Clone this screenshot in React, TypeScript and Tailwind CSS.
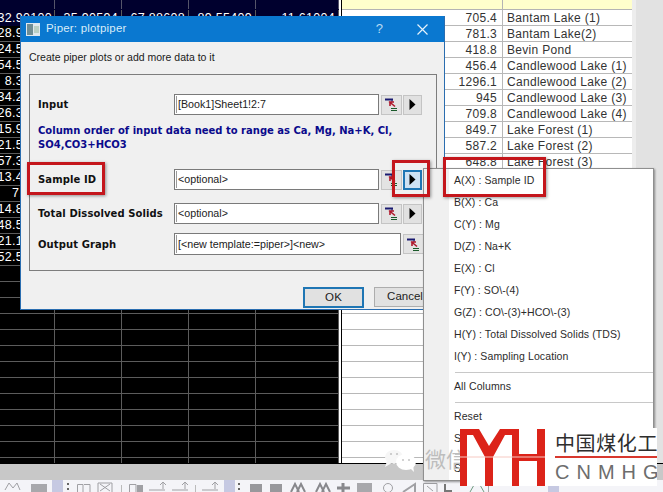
import React from "react";

const leftRows = ["32.90100","28.90000","24.50000","54.50000","8.30000","34.20000","26.30000","15.90000","21.50000","57.30000","13.40000","7.1000","14.80000","48.50000","21.10000","52.50000"];
const rightRows: [string, string][] = [
  ["705.4","Bantam Lake (1)"],["781.3","Bantam Lake(2)"],["418.8","Bevin Pond"],["456.4","Candlewood Lake (1)"],
  ["1296.1","Candlewood Lake (2)"],["945","Candlewood Lake (3)"],["709.8","Candlewood Lake (4)"],["849.7","Lake Forest (1)"],
  ["587.2","Lake Forest (2)"],["648.8","Lake Forest (3)"],
];
const firstRow = ["35.90594","67.88608","89.55409","11.61004"];

function PickIcon() {
  return (
    <svg width="15" height="15" viewBox="0 0 15 15">
      <path d="M1 2.500H9" stroke="#1a1a70" strokeWidth="2" />
      <path d="M8 2.500V5" stroke="#1a1a70" strokeWidth="1" />
      <path d="M5 4.500L11 9.500M6 9V5H10" stroke="#b0182c" strokeWidth="1.600" fill="none" />
      <path d="M7 11.500H13M7 13.500H13" stroke="#1a5a2a" strokeWidth="1" />
    </svg>
  );
}

function PickButton() {
  return (
    <div className="w-[21px] h-[20px] shrink-0 bg-[#e3e3e3] border border-[#c4c4c4] flex items-center justify-center">
      <PickIcon />
    </div>
  );
}

function ArrowButton({ focused }: { focused?: boolean }) {
  return (
    <div className={focused ? "w-[19px] h-[20px] shrink-0 bg-[#cfe2f3] border-2 border-[#1f76b4] flex items-center justify-center" : "w-[19px] h-[20px] shrink-0 bg-[#e1e1e1] border border-[#c4c4c4] flex items-center justify-center"}>
      <svg width="7" height="11" viewBox="0 0 7 11"><path d="M0.500 0L6.500 5.500L0.500 11Z" fill="#000" /></svg>
    </div>
  );
}

function Field({ text, wide }: { text: string; wide?: boolean }) {
  return (
    <div className={wide ? "w-[227px] h-full shrink-0 bg-white border border-[#7a7a7a] p-px" : "w-[205px] h-full shrink-0 bg-white border border-[#7a7a7a] p-px"}>
      <div className="h-full border-l border-[#9a9a9a] pl-[1px] flex items-center text-[10.7px] text-[#222] leading-none">{text}</div>
    </div>
  );
}

const labelCls = "w-[136px] shrink-0 font-['DejaVu_Sans'] font-bold text-[10px] text-[#111] tracking-[0.1px]";

function MenuItem({ text }: { text: string }) {
  return <div className="h-[22px] pl-[5px] flex items-center text-[10.5px] text-[#2b2b2b] tracking-[0.1px] whitespace-nowrap">{text}</div>;
}

function MenuSep() {
  return <div className="h-[8px] flex items-center pl-[6px]"><div className="h-px w-full bg-[#c8c8c8]" /></div>;
}

function Toolbar() {
  const g = "#a0a0a4";
  return (
    <svg width="663" height="12" viewBox="0 0 663 12" className="block">
      <path d="M5 10L9 3L13 8L17 3L20 10" stroke={g} fill="none" />
      <rect x="31" y="4" width="16" height="8" fill="#a8a8ac" />
      <rect x="52" y="0" width="11" height="12" fill="#c6c9e2" />
      <rect x="67" y="3" width="2" height="2" fill="#666" /><rect x="67" y="8" width="2" height="2" fill="#666" />
      <path d="M77.500 12V4.500H83V12M84 4.500H90V12" stroke={g} fill="none" />
      <path d="M98 12V3H112V12M100 4L110 11M110 4L100 11" stroke={g} fill="none" />
      <path d="M121.500 5V12" stroke="#bbb" />
      <path d="M129.500 12V4.500H136V12" stroke={g} fill="none" /><rect x="137" y="5" width="6" height="7" fill={g} />
      <path d="M149 10H165M163 3V9M160 5L163 2L166 5" stroke={g} fill="none" />
      <path d="M172 10H188M185 3V9M182 5L185 2L188 5" stroke={g} fill="none" />
      <path d="M195.500 5V12" stroke="#bbb" />
      <path d="M202 10H218M215 3V9M212 5L215 2L218 5" stroke={g} fill="none" />
      <rect x="224" y="0" width="11" height="12" fill="#c6c9e2" />
      <rect x="238" y="3" width="2" height="2" fill="#666" /><rect x="238" y="8" width="2" height="2" fill="#666" />
      <rect x="250" y="4" width="12" height="8" fill="#98989c" />
      <rect x="270" y="4" width="12" height="8" fill="#98989c" />
      <path d="M291 12L295 4L299 12M297 12L301 4L305 12" stroke="#88888c" strokeWidth="2" fill="none" />
      <path d="M316 12L320 4L324 12M322 12L326 4L330 12" stroke="#88888c" strokeWidth="2" fill="none" />
      <path d="M337 8H350M343 3V12" stroke="#88888c" strokeWidth="3" />
      <rect x="357" y="3" width="15" height="9" fill="#a8a8ac" />
      <circle cx="388" cy="8" r="4.500" stroke={g} fill="none" />
      <path d="M403 12L415 4V12" stroke={g} strokeWidth="2" fill="none" />
      <path d="M423.500 12V3.500H437V12M427 6L433 11" stroke={g} fill="none" />
      <path d="M445 4V11H452" stroke="#777" strokeWidth="2" fill="none" />
      <path d="M470 12L474 5H480L484 12" stroke="#6f9a80" fill="none" />
      <path d="M488.500 2V12M494.500 2H560" stroke="#aaa" fill="none" />
      <rect x="548" y="0" width="11" height="12" fill="#c6c9e2" />
    </svg>
  );
}

export default function App() {
  return (
    <div className="relative w-[663px] h-[492px] overflow-hidden bg-[#c8c8c8] font-['Liberation_Sans',sans-serif]">
      {/* Worksheets behind the dialog */}
      <div className="flex h-[463px] overflow-hidden">
        <div className="w-[339px] shrink-0 bg-black text-white text-[12.5px] leading-none tracking-[0.3px]">
          <div className="h-[10px] bg-[#00002e] border-b border-[#00002e] grid grid-cols-[55px_67px_67px_67px_83px]">
            {[0, 1, 2, 3, 4].map((i) => <div key={i} className="border-r border-[#55556a]" />)}
          </div>
          {Array.from({ length: 29 }).map((_, r) => (
            <div key={r} className={r === 0 ? "h-[16px] grid grid-cols-[55px_67px_67px_67px_83px] bg-[#00002e]" : "h-[16px] grid grid-cols-[55px_67px_67px_67px_83px] border-b border-[#5c5c5c]"}>
              <div className="border-r border-[#5c5c5c] pr-[2px] flex items-center justify-end whitespace-nowrap">{leftRows[r] ?? ""}</div>
              {[0, 1, 2, 3].map((c) => (
                <div key={c} className="border-r border-[#5c5c5c] pr-[3px] flex items-center justify-end whitespace-nowrap">{r === 0 ? firstRow[c] : ""}</div>
              ))}
            </div>
          ))}
        </div>
        <div className="w-[3px] shrink-0 bg-white border-r border-black" />
        <div className="w-[290px] shrink-0 bg-white text-[12px] text-[#333] tracking-[0.3px] leading-none">
          <div className="h-[10px] bg-[#ffffcc] border-b border-[#b4b4b4] grid grid-cols-[161px_129px]">
            <div className="border-r border-[#b4b4b4]" /><div />
          </div>
          {Array.from({ length: 29 }).map((_, r) => (
            <div key={r} className="h-[16px] grid grid-cols-[161px_129px] border-b border-[#b8b8b8]">
              <div className="border-r border-[#b8b8b8] pr-[5px] flex items-center justify-end">{rightRows[r]?.[0] ?? ""}</div>
              <div className="pl-[4px] flex items-center whitespace-nowrap">{rightRows[r]?.[1] ?? ""}</div>
            </div>
          ))}
        </div>
        <div className="flex-1 bg-[#e2e2e2] border-l-[4px] border-[#ededed]" />
      </div>
      <div className="h-[17px] bg-[#c8c8c8] border-t border-black" />
      <div className="h-[12px] bg-[#f4f4f8]"><Toolbar /></div>

      {/* Dialog */}
      <div className="absolute left-[20px] top-[16px] w-[425px] h-[294px] bg-[#f0f0f0] border-x border-b border-[#2a6db0] overflow-hidden">
        <div className="h-[26px] bg-[#0a78d0] flex items-center pl-[5px] pr-[16px]">
          <svg width="14" height="13" viewBox="0 0 14 13"><rect width="14" height="13" fill="#dfe8ee" /><rect x="1" y="1" width="6" height="11" fill="#6f8d94" /><rect x="8" y="3" width="5" height="7" fill="#b9cfc4" /></svg>
          <span className="ml-[6px] text-[11.5px] text-[#d9ecf8] tracking-[0.2px]">Piper: plotpiper</span>
          <span className="ml-auto text-[13px] text-[#b8dcf3]">?</span>
          <svg className="ml-[34px]" width="11" height="11" viewBox="0 0 11 11"><path d="M0.500 0.500L10.500 10.500M10.500 0.500L0.500 10.500" stroke="#e6f3fb" strokeWidth="1.200" /></svg>
        </div>
        <div className="pl-[8px]">
          <p className="h-[32px] flex items-center text-[10.5px] text-[#1a1a1a]">Create piper plots or add more data to it</p>
          <div className="w-[408px] h-[197px] border border-[#7d7d7d] pl-[8px] pt-[19px]">
            <div className="flex items-center h-[21px]">
              <span className={labelCls}>Input</span>
              <Field text="[Book1]Sheet1!2:7" />
              <div className="ml-[2px]"><PickButton /></div>
              <div className="ml-px"><ArrowButton /></div>
            </div>
            <p className="mt-[9px] h-[28px] font-['DejaVu_Sans'] font-bold text-[10px] leading-[14px] text-[#0a0a8c]">
              Column order of input data need to range as Ca, Mg, Na+K, Cl,<br />SO4,CO3+HCO3
            </p>
            <div className="flex items-center h-[21px] mt-[17px]">
              <span className={labelCls}>Sample ID</span>
              <Field text="<optional>" />
              <div className="ml-[2px]"><PickButton /></div>
              <div className="ml-px"><ArrowButton focused /></div>
            </div>
            <div className="flex items-center h-[21px] mt-[13px]">
              <span className={labelCls}>Total Dissolved Solids</span>
              <Field text="<optional>" />
              <div className="ml-[2px]"><PickButton /></div>
              <div className="ml-px"><ArrowButton /></div>
            </div>
            <div className="flex items-center h-[22px] mt-[9px]">
              <span className={labelCls}>Output Graph</span>
              <Field text="[<new template:=piper>]<new>" wide />
              <div className="ml-[2px]"><PickButton /></div>
            </div>
          </div>
          <div className="flex justify-end gap-[10px] w-[408px] pr-[1px] mt-[16px]">
            <div className="w-[61px] h-[21px] bg-[#e1e1e1] border-2 border-[#1f76b4] flex items-center justify-center text-[11.5px] tracking-[0.2px] text-[#222]">OK</div>
            <div className="w-[62px] h-[20px] bg-[#e1e1e1] border border-[#adadad] flex items-center justify-center text-[11.5px] text-[#222]">Cancel</div>
          </div>
        </div>
      </div>

      {/* Popup menu */}
      <div className="absolute left-[423px] top-[168px] w-[231px] h-[313px] flex border border-[#8f8f8f] shadow-[1px_1px_2px_rgba(0,0,0,0.4)]">
        <div className="w-[25px] bg-[#f0f0f0]" />
        <div className="flex-1 bg-white pt-px">
          {["A(X) : Sample ID","B(X) : Ca","C(Y) : Mg","D(Z) : Na+K","E(X) : Cl","F(Y) : SO\\-(4)","G(Z) : CO\\-(3)+HCO\\-(3)","H(Y) : Total Dissolved Solids (TDS)","I(Y) : Sampling Location"].map((t) => <MenuItem key={t} text={t} />)}
          <MenuSep />
          <MenuItem text="All Columns" />
          <MenuSep />
          <MenuItem text="Reset" />
          <MenuItem text="S" />
          <MenuSep />
          <MenuItem text="S" />
        </div>
      </div>

      {/* Red highlight boxes */}
      <div className="absolute left-[27px] top-[162px] w-[78px] h-[33px] border-[3px] border-[#c4161c] shadow-[1px_1px_3px_rgba(0,0,0,0.4)]" />
      <div className="absolute left-[392px] top-[160px] w-[38px] h-[37px] border-[3px] border-[#c4161c] shadow-[1px_1px_3px_rgba(0,0,0,0.4)]" />
      <div className="absolute left-[443px] top-[157px] w-[103px] h-[40px] border-[3px] border-[#c4161c] shadow-[1px_1px_3px_rgba(0,0,0,0.4)]" />

      {/* WeChat watermark */}
      <div className="absolute left-[384px] top-[447px] flex items-start">
        <svg width="33" height="25" viewBox="0 0 33 25">
          <ellipse cx="10" cy="10" rx="9" ry="7" fill="#f6f6f6" />
          <path d="M3 14L1 20L8 16Z" fill="#f6f6f6" />
          <ellipse cx="22" cy="15" rx="10" ry="8" fill="#ffffff" />
          <path d="M26 21L30 25L29 18Z" fill="#ffffff" />
          <circle cx="7" cy="7" r="1.100" fill="#c4c4c4" /><circle cx="13" cy="7" r="1.100" fill="#c4c4c4" />
          <circle cx="19" cy="13" r="1" fill="#c4c4c4" /><circle cx="25" cy="13" r="1" fill="#c4c4c4" />
        </svg>
        <span className="ml-[8px] -mt-[1px] text-[21px] leading-[24px] text-[#bdbdbd] font-['Noto_Sans_CJK_SC',sans-serif] whitespace-nowrap">微信</span>
      </div>

      {/* Logo */}
      <div className="absolute left-[460px] top-[428px] w-[197px] h-[58px] bg-white flex">
        <svg width="86" height="58" viewBox="0 0 86 58" className="shrink-0">
          <path fill="#dc2319" d="M0 1H19L29 18L40 1H59V26H77V1H85V58H77V33H59V58H52V7H45L33 29V58H25V29L13 7H7V58H0Z" />
          <path d="M0 29H85" stroke="#f6c9c2" strokeWidth="1" />
        </svg>
        <div className="ml-[9px] flex-1 flex flex-col overflow-hidden">
          <span className="mt-[5px] h-[19px] text-[20px] leading-[19px] tracking-[0.600px] text-[#2e2e2e] font-['Noto_Sans_CJK_SC',sans-serif] whitespace-nowrap">中国煤化工</span>
          <div className="mt-[4px] h-[2px] bg-[#d8382e]" />
          <span className="mt-[5px] text-[20px] leading-[18px] tracking-[7px] text-[#6d6d6d] whitespace-nowrap">CNMHG</span>
        </div>
      </div>
    </div>
  );
}
